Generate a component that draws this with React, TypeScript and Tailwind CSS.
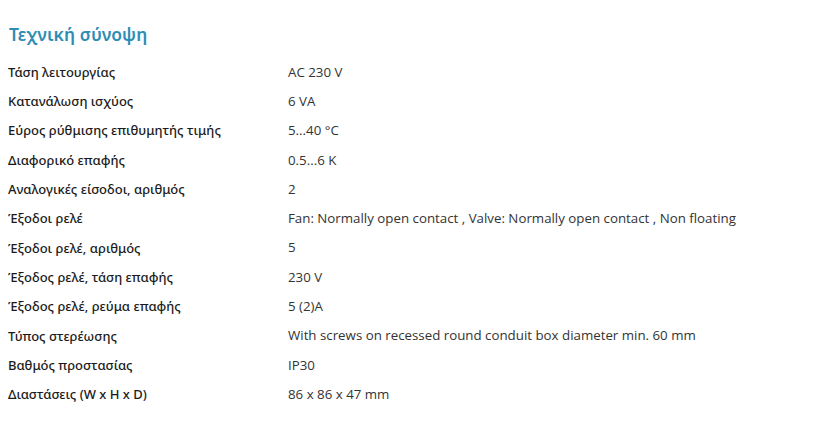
import React from "react";

const rows: [string, string][] = [
  ["Τάση λειτουργίας", "AC 230 V"],
  ["Κατανάλωση ισχύος", "6 VA"],
  ["Εύρος ρύθμισης επιθυμητής τιμής", "5...40 °C"],
  ["Διαφορικό επαφής", "0.5...6 K"],
  ["Αναλογικές είσοδοι, αριθμός", "2"],
  ["Έξοδοι ρελέ", "Fan: Normally open contact , Valve: Normally open contact , Non floating"],
  ["Έξοδοι ρελέ, αριθμός", "5"],
  ["Έξοδος ρελέ, τάση επαφής", "230 V"],
  ["Έξοδος ρελέ, ρεύμα επαφής", "5 (2)A"],
  ["Τύπος στερέωσης", "With screws on recessed round conduit box diameter min. 60 mm"],
  ["Βαθμός προστασίας", "IP30"],
  ["Διαστάσεις (W x H x D)", "86 x 86 x 47 mm"],
];

export default function App() {
  return (
    <div className="w-[832px] h-[426px] bg-white pl-[8px] pt-[22px]">
      <h2 className="text-[17.5px] font-semibold text-[#2e8db3] leading-[24px] pl-[1px] tracking-[0.1px]" style={{ fontFamily: "'Noto Sans', sans-serif" }}>
        Τεχνική σύνοψη
      </h2>
      <div className="mt-[12px] flex flex-col">
        {rows.map(([k, v]) => (
          <div key={k} className="flex h-[29.3px] items-center">
            <div className="w-[280px] text-[13px] font-medium text-[#1b1b1b]" style={{ fontFamily: "'Noto Sans', sans-serif" }}>{k}</div>
            <div className="text-[13.3px] text-[#333333]" style={{ fontFamily: "'Open Sans', sans-serif" }}>{v}</div>
          </div>
        ))}
      </div>
    </div>
  );
}
